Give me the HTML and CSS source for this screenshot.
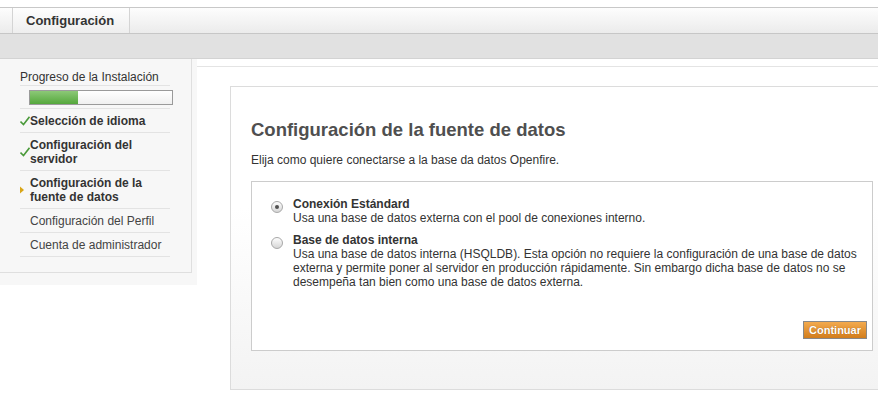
FILE: index.html
```html
<!DOCTYPE html>
<html lang="es">
<head>
<meta charset="utf-8">
<title>Configuración</title>
<link rel="stylesheet" href="styles.css">
</head>
<body>
<div class="topbar">
  <div class="tab">Configuración</div>
</div>
<div class="subbar"></div>
<div class="page">
  <aside class="side">
    <div class="side-inner">
      <ul class="steps">
        <li class="head">Progreso de la Instalación</li>
        <li class="prog"><div class="bar"><div class="fill" style="width:34%"></div></div></li>
        <li class="step done"><span class="ico"><svg width="10" height="10" viewBox="0 0 10 10"><path d="M0.5 5.5 L3.5 8.5 L9.5 0.8" fill="none" stroke="#4a9a3a" stroke-width="1.6"/></svg></span><span>Selección de idioma</span></li>
        <li class="step done"><span class="ico"><svg width="10" height="10" viewBox="0 0 10 10"><path d="M0.5 5.5 L3.5 8.5 L9.5 0.8" fill="none" stroke="#4a9a3a" stroke-width="1.6"/></svg></span><span>Configuración del servidor</span></li>
        <li class="step cur"><span class="ico"><svg width="10" height="10" viewBox="0 0 10 10"><path d="M0 1.5 L4 5 L0 8.5 Z" fill="#d9a617"/></svg></span><span>Configuración de la fuente de datos</span></li>
        <li class="step"><span class="ico"></span><span>Configuración del Perfil</span></li>
        <li class="step"><span class="ico"></span><span>Cuenta de administrador</span></li>
      </ul>
    </div>
  </aside>
  <main class="main">
    <div class="panel">
      <h1>Configuración de la fuente de datos</h1>
      <p class="intro">Elija como quiere conectarse a la base da datos Openfire.</p>
      <div class="box">
        <div class="opt">
          <span class="radio checked"></span>
          <div class="opt-text">
            <div class="opt-title">Conexión Estándard</div>
            <div class="opt-desc">Usa una base de datos externa con el pool de conexiones interno.</div>
          </div>
        </div>
        <div class="opt">
          <span class="radio"></span>
          <div class="opt-text">
            <div class="opt-title">Base de datos interna</div>
            <div class="opt-desc">Usa una base de datos interna (HSQLDB). Esta opción no requiere la configuración de una base de datos externa y permite poner al servidor en producción rápidamente. Sin embargo dicha base de datos no se desempeña tan bien como una base de datos externa.</div>
          </div>
        </div>
        <button class="btn">Continuar</button>
      </div>
    </div>
  </main>
</div>
</body>
</html>
```

FILE: styles.css
```css
html, body {
  margin: 0;
  padding: 0;
  background: #fff;
}
body {
  font-family: "Liberation Sans", Arial, sans-serif;
  font-size: 12px;
  color: #333;
}
.topbar {
  margin-top: 7px;
  height: 25px;
  border-top: 1px solid #c8c8c8;
  border-bottom: 1px solid #c6c6c6;
  background: linear-gradient(#fdfdfd, #ebebeb);
  display: flex;
}
.tab {
  margin-left: 12px;
  width: 103px;
  padding-left: 13px;
  border-left: 1px solid #d4d4d4;
  border-right: 1px solid #d4d4d4;
  font-weight: bold;
  font-size: 13px;
  line-height: 25px;
  color: #333;
  background: linear-gradient(#fefefe, #eeeeee);
}
.subbar {
  height: 24px;
  background: #e1e1e1;
  border-bottom: 1px solid #d3d3d3;
}
.page {
  display: flex;
  align-items: flex-start;
  overflow: hidden;
  height: 343px;
}
.side {
  flex: 0 0 auto;
  width: 192px;
  padding: 0 5px 12px 0;
  background: #f7f7f7;
}
.side-inner {
  background: #f7f7f7;
  border-right: 1px solid #dfdfdf;
  border-bottom: 1px solid #dfdfdf;
  padding: 10px 0 15px 20px;
}
.steps {
  list-style: none;
  margin: 0;
  padding: 0;
  width: 150px;
}
.steps li {
  border-bottom: 1px solid #e3e3e3;
}
.head {
  line-height: 16px;
  color: #333;
}
.prog {
  padding: 4px 0 3px 9px;
}
.bar {
  width: 142px;
  height: 13px;
  border: 1px solid #9a9a9a;
  background: linear-gradient(#ffffff, #f0f0f0);
}
.fill {
  height: 100%;
  background: linear-gradient(#8cc877, #55a83c);
}
.step {
  display: flex;
  align-items: center;
  padding: 5px 0 4px 0;
  line-height: 14px;
  color: #444;
}
.step .ico {
  flex: 0 0 10px;
  width: 10px;
  height: 10px;
  display: flex;
}
.step.done, .step.cur {
  font-weight: bold;
  color: #333;
}
.main {
  flex: 1 1 auto;
  min-width: 0;
  margin-top: 7px;
  border-top: 1px solid #e4e4e4;
  background: #fff;
  height: 400px;
}
.panel {
  margin: 19px 0 0 33px;
  width: 622px;
  padding: 0 20px 38px 20px;
  border: 1px solid #dcdcdc;
  background: linear-gradient(#ffffff 40%, #f3f3f3);
}
h1 {
  margin: 0;
  padding-top: 32px;
  font-size: 18.5px;
  line-height: 22px;
  color: #4f4f4f;
  font-weight: bold;
}
.intro {
  margin: 11px 0 0 0;
  line-height: 16px;
  color: #333;
}
.box {
  margin-top: 13px;
  height: 170px;
  box-sizing: border-box;
  border: 1px solid #cccccc;
  background: #fff;
  display: flex;
  flex-direction: column;
  padding: 15px 0 0 19px;
}
.opt {
  display: flex;
  align-items: flex-start;
  gap: 10px;
  margin-bottom: 8px;
}
.opt-text {
  line-height: 14px;
  padding-right: 6px;
}
.opt-title {
  font-weight: bold;
  color: #333;
}
.opt-desc {
  color: #333;
}
.radio {
  flex: 0 0 auto;
  width: 10px;
  height: 10px;
  margin-top: 4px;
  border: 1px solid #a8a8a8;
  border-radius: 50%;
  background: linear-gradient(#fdfdfd, #d6d6d6);
  display: flex;
  align-items: center;
  justify-content: center;
}
.radio.checked::after {
  content: "";
  width: 4px;
  height: 4px;
  border-radius: 50%;
  background: #505050;
}
.btn {
  margin: auto 5px 11px 0;
  align-self: flex-end;
  height: 18px;
  padding: 0 5px;
  border: 1px solid #888;
  border-radius: 0;
  background: linear-gradient(#f3aa4e, #d27d1c);
  color: #fff;
  font-family: "Liberation Sans", Arial, sans-serif;
  font-weight: bold;
  font-size: 11px;
  line-height: 16px;
  text-shadow: 0 0 1px #9a5a10;
}
```
